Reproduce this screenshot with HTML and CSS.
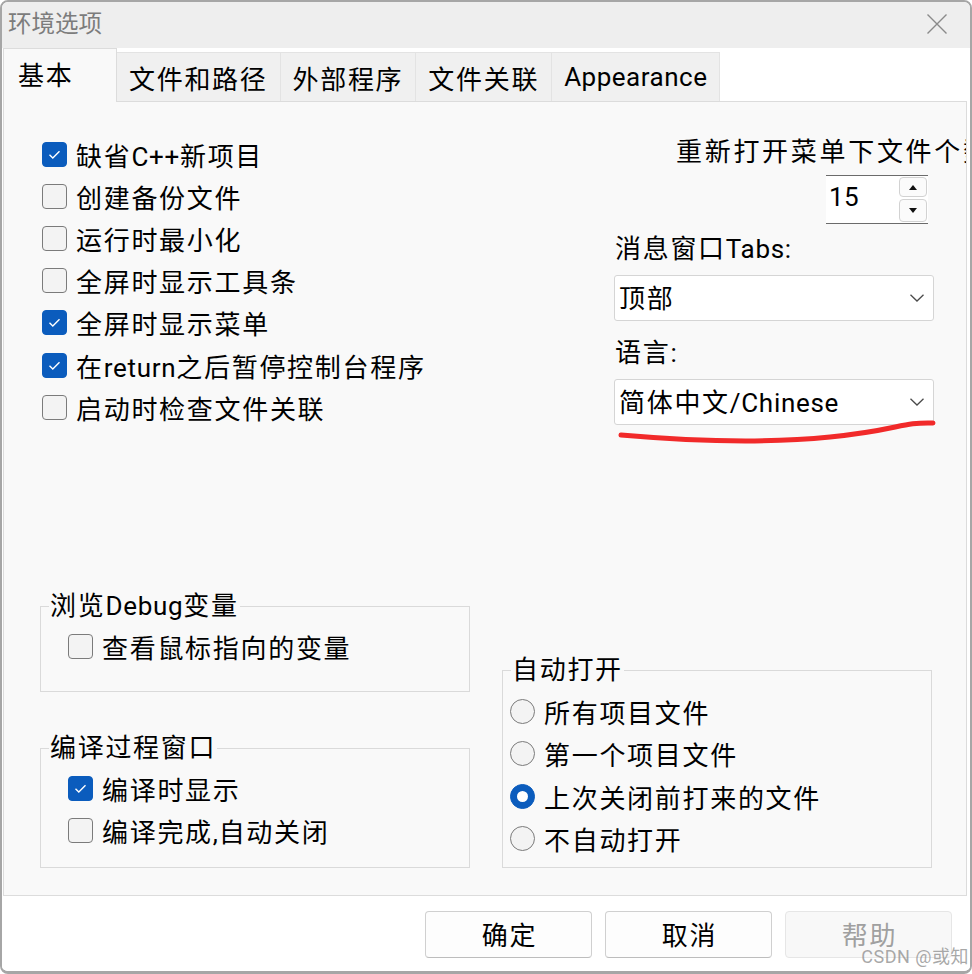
FILE: index.html
```html
<!DOCTYPE html>
<html lang="zh-CN">
<head>
<meta charset="utf-8">
<title>环境选项</title>
<link rel="stylesheet" href="styles.css">
</head>
<body>
<div class="window">
  <header class="titlebar">
    <span class="title">环境选项</span>
    <svg class="close" width="20" height="20" viewBox="0 0 20 20"><path d="M0.5 0.5L19.5 19.5M19.5 0.5L0.5 19.5"/></svg>
  </header>
  <nav class="tabs">
    <div class="tab active">基本</div>
    <div class="tab">文件和路径</div>
    <div class="tab">外部程序</div>
    <div class="tab">文件关联</div>
    <div class="tab"><span class="lat">Appearance</span></div>
  </nav>
  <main class="panel">
    <section class="top">
      <div class="checklist">
        <div class="check on"><span class="box"><svg viewBox="0 0 25 25"><path d="M7.5 12.8L10.8 16L17.5 9.3"/></svg></span><span>缺省<span class="lat">C++</span>新项目</span></div>
        <div class="check"><span class="box"></span><span>创建备份文件</span></div>
        <div class="check"><span class="box"></span><span>运行时最小化</span></div>
        <div class="check"><span class="box"></span><span>全屏时显示工具条</span></div>
        <div class="check on"><span class="box"><svg viewBox="0 0 25 25"><path d="M7.5 12.8L10.8 16L17.5 9.3"/></svg></span><span>全屏时显示菜单</span></div>
        <div class="check on"><span class="box"><svg viewBox="0 0 25 25"><path d="M7.5 12.8L10.8 16L17.5 9.3"/></svg></span><span>在<span class="lat">return</span>之后暂停控制台程序</span></div>
        <div class="check"><span class="box"></span><span>启动时检查文件关联</span></div>
      </div>
      <div class="side">
        <div class="recent-label">重新打开菜单下文件个数</div>
        <div class="spinner">
          <span class="lat spin-value">15</span>
          <span class="spin-buttons">
            <span class="spin-btn up"><svg width="8" height="5" viewBox="0 0 8 5"><path d="M0 5L4 0L8 5Z"/></svg></span>
            <span class="spin-btn down"><svg width="8" height="5" viewBox="0 0 8 5"><path d="M0 0L8 0L4 5Z"/></svg></span>
          </span>
        </div>
        <div class="field-label first">消息窗口<span class="lat">Tabs:</span></div>
        <div class="select"><span>顶部</span><svg class="chev" width="14" height="8" viewBox="0 0 14 8"><path d="M0.5 0.8L7 7L13.5 0.8"/></svg></div>
        <div class="field-label">语言<span class="lat">:</span></div>
        <div class="select"><span>简体中文<span class="lat">/Chinese</span></span><svg class="chev" width="14" height="8" viewBox="0 0 14 8"><path d="M0.5 0.8L7 7L13.5 0.8"/></svg></div>
      </div>
    </section>

    <section class="bottom">
      <div class="left-groups">
        <div class="group debug">
          <div class="group-title">浏览<span class="lat">Debug</span>变量</div>
          <div class="check"><span class="box"></span><span>查看鼠标指向的变量</span></div>
        </div>
        <div class="group compile">
          <div class="group-title">编译过程窗口</div>
          <div class="check on"><span class="box"><svg viewBox="0 0 25 25"><path d="M7.5 12.8L10.8 16L17.5 9.3"/></svg></span><span>编译时显示</span></div>
          <div class="check"><span class="box"></span><span>编译完成<span class="lat">,</span>自动关闭</span></div>
        </div>
      </div>
      <div class="group autoopen">
        <div class="group-title">自动打开</div>
        <div class="radio"><span class="dot"></span><span>所有项目文件</span></div>
        <div class="radio"><span class="dot"></span><span>第一个项目文件</span></div>
        <div class="radio on"><span class="dot"></span><span>上次关闭前打来的文件</span></div>
        <div class="radio"><span class="dot"></span><span>不自动打开</span></div>
      </div>
    </section>
  </main>
  <footer class="footer">
    <button class="btn">确定</button>
    <button class="btn">取消</button>
    <button class="btn disabled" disabled>帮助</button>
  </footer>

  <svg class="annotation" width="972" height="974" viewBox="0 0 972 974"><path d="M621 435C690 441 760 444 830 437S900 422 933 423"/></svg>
  <div class="watermark">CSDN @或知</div>
</div>
</body>
</html>
```

FILE: styles.css
```css
* { box-sizing: border-box; }
html, body { margin: 0; padding: 0; }
body {
  background: #ffffff;
  font-family: "Roboto", "Noto Sans CJK SC", sans-serif;
  color: #000;
}

.window {
  position: relative;
  width: 972px;
  height: 974px;
  border: 2px solid #a6a6a6;
  border-bottom-width: 3px;
  border-radius: 8px;
  display: flex;
  flex-direction: column;
  overflow: hidden;
  background: #fff;
}

.titlebar {
  height: 46px;
  flex: none;
  background: #eeeeee;
  display: flex;
  align-items: center;
  justify-content: space-between;
  padding: 0 23px 0 6px;
}
.title {
  font-size: 23.5px;
  line-height: 30px;
  color: #7c7c7c;
  margin-top: -2px;
}
.close {
  stroke: #8a8a8a;
  stroke-width: 1.4;
  fill: none;
  margin-top: -2px;
}

.tabs {
  height: 53px;
  flex: none;
  display: flex;
  align-items: flex-end;
  padding-left: 1px;
  background: #fff;
  position: relative;
  z-index: 1;
}
.tab {
  height: 49px;
  display: flex;
  align-items: center;
  padding: 0 12px;
  background: #f0f0f0;
  border: 1px solid #e3e3e3;
  border-left: none;
  border-bottom: none;
  font-size: 26px;
  letter-spacing: 1.7px;
  white-space: nowrap;
}
.tab .lat { letter-spacing: 0.5px; }
.tab.active {
  height: 54px;
  width: 114px;
  margin-bottom: -1px;
  padding: 0 0 4px 14px;
  background: #f9f9f9;
  border: 1px solid #dcdcdc;
  border-bottom: none;
}

.lat { letter-spacing: 0.7px; }

.panel {
  height: 795px;
  flex: none;
  margin: 0 3px 0 1px;
  background: #f9f9f9;
  border: 1px solid #dcdcdc;
  display: flex;
  flex-direction: column;
  padding: 31px 32px 27px 36px;
  overflow: hidden;
  font-size: 26px;
  letter-spacing: 1.7px;
}

.top {
  display: grid;
  grid-template-columns: 1fr 320px;
}
.checklist { margin-left: 2px; }

.check, .radio {
  display: flex;
  align-items: center;
  gap: 9px;
  height: 42.2px;
  white-space: nowrap;
}
.box {
  width: 25px;
  height: 25px;
  flex: none;
  border: 1.5px solid #7b7b7b;
  border-radius: 4px;
  background: #f3f3f3;
  display: flex;
  align-items: center;
  justify-content: center;
}
.check.on .box {
  background: #0b5cbd;
  border-color: #0b5cbd;
}
.box svg {
  width: 25px;
  height: 25px;
  flex: none;
  fill: none;
  stroke: #fff;
  stroke-width: 1.4;
}

.side { min-width: 0; }
.recent-label {
  margin: 4px 0 0 62px;
  line-height: 30px;
  white-space: nowrap;
  letter-spacing: 2.7px;
}
.spinner {
  margin: 8px 0 0 212px;
  width: 102px;
  height: 49px;
  background: #fff;
  border-top: 1px solid #6b6b6b;
  border-bottom: 1px solid #6b6b6b;
  display: flex;
  align-items: center;
  justify-content: space-between;
  padding: 0 1px 0 3px;
}
.spin-value { margin-top: -6px; letter-spacing: 0.5px; }
.spin-buttons {
  display: flex;
  flex-direction: column;
  gap: 2px;
  width: 28px;
}
.spin-btn {
  display: flex;
  align-items: center;
  justify-content: center;
  border: 1px solid #d2d2d2;
  border-radius: 4px;
  background: #fbfbfb;
}
.spin-btn.up { height: 20px; }
.spin-btn.down { height: 23px; }
.spin-btn svg { fill: #111; }

.field-label {
  line-height: 30px;
  margin-top: 17px;
  margin-left: 1px;
}
.field-label.first { margin-top: 10px; }
.select {
  margin-top: 11px;
  height: 46px;
  border: 1px solid #d5d5d5;
  border-radius: 3px;
  background: #fff;
  display: flex;
  align-items: center;
  justify-content: space-between;
  padding: 0 9px 3px 4px;
  white-space: nowrap;
}
.chev {
  fill: none;
  stroke: #4a4a4a;
  stroke-width: 1.3;
  flex: none;
  margin-top: 3px;
}

.bottom {
  margin-top: auto;
  display: grid;
  grid-template-columns: 430px 430px;
  column-gap: 32px;
  align-items: end;
}
.left-groups {
  display: flex;
  flex-direction: column;
  gap: 56px;
}
.group {
  border: 1px solid #dadada;
  padding-left: 27px;
}
.group.debug { height: 86px; }
.group.compile { height: 120px; }
.group.autoopen { height: 198px; padding-left: 7px; }
.group-title {
  width: fit-content;
  line-height: 30px;
  margin: -16px 0 4px -19px;
  padding: 0 1px;
  background: #f9f9f9;
  white-space: nowrap;
}
.group.autoopen .group-title { margin: -16px 0 5px 1px; }

.radio { height: 42.5px; }
.dot {
  width: 25px;
  height: 25px;
  flex: none;
  border-radius: 50%;
  border: 1.5px solid #7b7b7b;
  background: #f3f3f3;
  position: relative;
}
.radio.on .dot {
  background: #0b5cbd;
  border-color: #0b5cbd;
}
.radio.on .dot::after {
  content: "";
  position: absolute;
  left: 50%;
  top: 50%;
  width: 11px;
  height: 11px;
  margin: -5.5px 0 0 -5.5px;
  border-radius: 50%;
  background: #fff;
}

.footer {
  flex: 1;
  display: flex;
  justify-content: flex-end;
  align-items: flex-start;
  gap: 13px;
  padding: 15px 18px 0 0;
  background: #fff;
}
.btn {
  width: 167px;
  height: 47px;
  border: 1px solid #d0d0d0;
  border-bottom-color: #bdbdbd;
  border-radius: 4px;
  background: #fdfdfd;
  font-family: "Roboto", "Noto Sans CJK SC", sans-serif;
  font-size: 26px;
  letter-spacing: 1.7px;
  padding: 0 0 2px 2px;
  color: #000;
}
.btn.disabled {
  color: #a0a0a0;
  background: #f8f8f8;
  border-color: #e6e6e6;
}

.annotation {
  position: absolute;
  left: -2px;
  top: -2px;
  pointer-events: none;
}
.annotation path {
  fill: none;
  stroke: #f12a2a;
  stroke-width: 5;
  stroke-linecap: round;
}

.watermark {
  position: absolute;
  right: 1px;
  bottom: 3px;
  font-size: 18px;
  color: rgba(140, 140, 140, 0.75);
  letter-spacing: 0.5px;
  white-space: nowrap;
}
```
